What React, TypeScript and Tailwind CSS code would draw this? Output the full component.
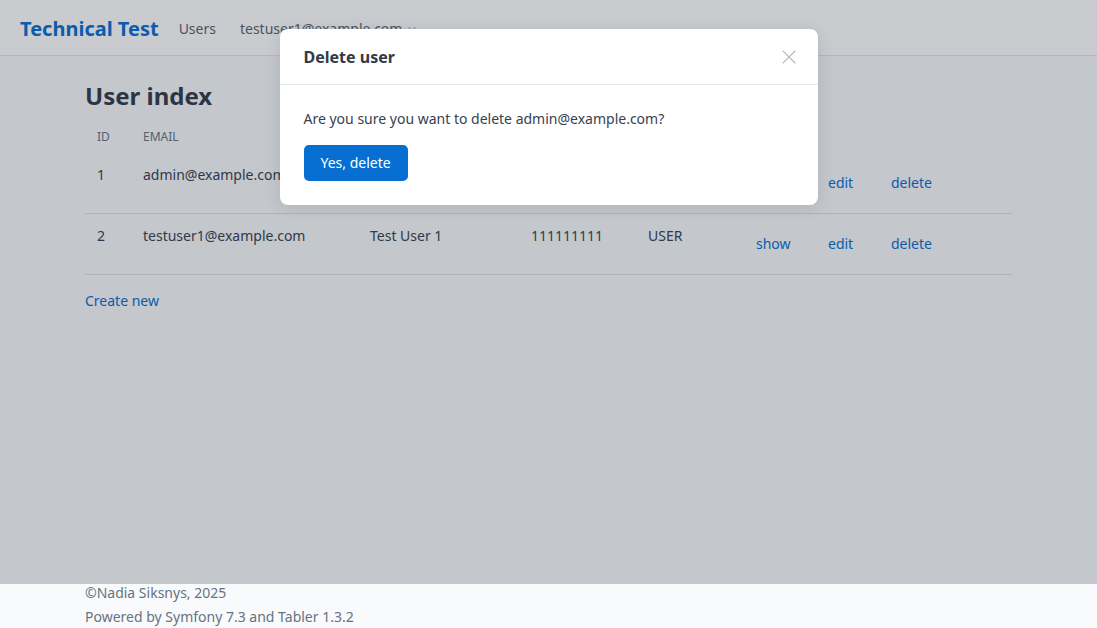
import { X, ChevronDown } from "lucide-react";

const users = [
  { id: 1, email: "admin@example.com", name: "Admin", phone: "000000000", role: "ADMIN" },
  { id: 2, email: "testuser1@example.com", name: "Test User 1", phone: "111111111", role: "USER" },
];

const cols = "grid grid-cols-[46px_227px_161px_117px_108px_72px_63px_1fr]";

export default function App() {
  return (
    <div
      className="relative flex h-[628px] flex-col overflow-hidden bg-[#f9fafb] text-sm text-[#374151]"
      style={{ fontFamily: '"Noto Sans", "Open Sans", sans-serif' }}
    >
      <header className="flex h-14 shrink-0 items-center border-b border-[#e3e6ea] bg-white px-5 pt-[3px]">
        <a href="#" className="text-[20px] font-bold text-[#066fd1]">
          Technical Test
        </a>
        <nav className="ml-5 flex items-center gap-6 text-sm text-[#5a646f]">
          <a href="#">Users</a>
          <a href="#" className="flex items-center gap-1">
            testuser1@example.com
            <ChevronDown className="h-3 w-3" strokeWidth={1.5} />
          </a>
        </nav>
      </header>

      <main className="flex-1 px-[85px] pt-6">
        <h1 className="text-2xl font-bold leading-8 text-[#323b49]">User index</h1>
        <div className="mt-[9px]">
          <div className={`${cols} h-8 items-center text-xs uppercase text-[#667382]`}>
            <div className="px-3">ID</div>
            <div className="px-3">Email</div>
            <div className="px-3">Name</div>
            <div className="px-3">Phone</div>
            <div className="px-3">Roles</div>
            <div className="col-span-3 px-3">Actions</div>
          </div>
          {users.map((u) => (
            <div key={u.id} className={`${cols} h-[61px] border-b border-[#dce0e5]`}>
              <div className="px-3 pt-3">{u.id}</div>
              <div className="px-3 pt-3">{u.email}</div>
              <div className="px-3 pt-3">{u.name}</div>
              <div className="px-3 pt-3">{u.phone}</div>
              <div className="px-3 pt-3">{u.role}</div>
              <div className="px-3 pt-[20px]">
                <a href="#" className="text-[#066fd1]">show</a>
              </div>
              <div className="px-3 pt-[20px]">
                <a href="#" className="text-[#066fd1]">edit</a>
              </div>
              <div className="px-3 pt-[20px]">
                <a href="#" className="text-[#066fd1]">delete</a>
              </div>
            </div>
          ))}
          <a href="#" className="mt-4 inline-block leading-5 text-[#066fd1]">
            Create new
          </a>
        </div>
      </main>

      <footer className="h-[47px] shrink-0 px-[85px] leading-6 text-[#667382]">
        <p>©Nadia Siksnys, 2025</p>
        <p>Powered by Symfony 7.3 and Tabler 1.3.2</p>
      </footer>

      <div className="absolute inset-x-0 top-0 flex h-[584px] justify-center bg-[#182433]/[0.235] pt-[29px]">
        <div className="h-fit w-[538px] rounded-lg bg-white shadow-[0_2px_16px_rgba(24,36,51,0.12)]">
          <div className="flex h-[56px] items-center justify-between border-b border-[#e3e6ea] pl-6 pr-[17px]">
            <h2 className="text-base font-bold text-[#313a47]">Delete user</h2>
            <button className="text-[#b3b8c0]">
              <X className="h-6 w-6" strokeWidth={1.1} />
            </button>
          </div>
          <div className="p-6">
            <p className="leading-5 text-[#374151]">Are you sure you want to delete admin@example.com?</p>
            <button className="mt-4 h-9 rounded-[5px] bg-[#066fd1] px-[17px] text-sm text-white">
              Yes, delete
            </button>
          </div>
        </div>
      </div>
    </div>
  );
}
